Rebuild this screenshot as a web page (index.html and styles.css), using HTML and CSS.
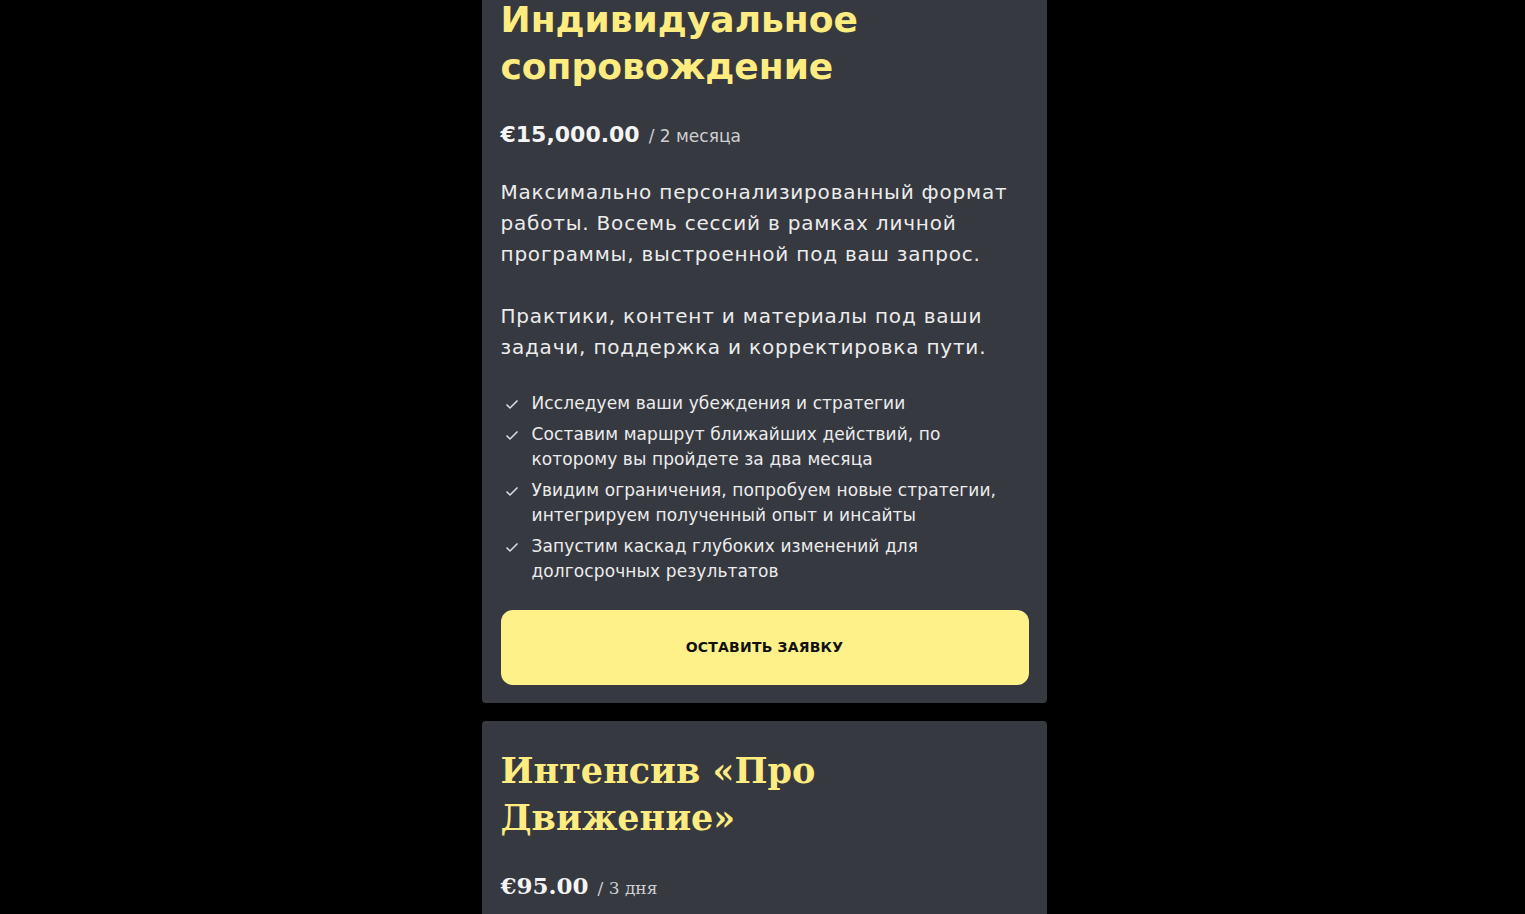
FILE: index.html
```html
<!DOCTYPE html>
<html lang="ru">
<head>
<meta charset="utf-8">
<title>Тарифы</title>
<link rel="stylesheet" href="styles.css">
</head>
<body>
<main class="page">
  <section class="card card-sans">
    <h2 class="title">Индивидуальное сопровождение</h2>
    <div class="price-row">
      <span class="price">€15,000.00</span>
      <span class="period">/ 2 месяца</span>
    </div>
    <div class="desc">
      <p>Максимально персонализированный формат работы. Восемь сессий в рамках личной программы, выстроенной под ваш запрос.</p>
      <p>Практики, контент и материалы под ваши задачи, поддержка и корректировка пути.</p>
    </div>
    <ul class="features">
      <li><svg class="check" viewBox="0 0 16 16"><path d="M2.5 8.5 L6 12 L13.5 4.5"/></svg><span>Исследуем ваши убеждения и стратегии</span></li>
      <li><svg class="check" viewBox="0 0 16 16"><path d="M2.5 8.5 L6 12 L13.5 4.5"/></svg><span>Составим маршрут ближайших действий, по которому вы пройдете за два месяца</span></li>
      <li><svg class="check" viewBox="0 0 16 16"><path d="M2.5 8.5 L6 12 L13.5 4.5"/></svg><span>Увидим ограничения, попробуем новые стратегии, интегрируем полученный опыт и инсайты</span></li>
      <li><svg class="check" viewBox="0 0 16 16"><path d="M2.5 8.5 L6 12 L13.5 4.5"/></svg><span>Запустим каскад глубоких изменений для долгосрочных результатов</span></li>
    </ul>
    <button class="cta">ОСТАВИТЬ ЗАЯВКУ</button>
  </section>
  <section class="card card-serif">
    <h2 class="title">Интенсив «Про Движение»</h2>
    <div class="price-row">
      <span class="price">€95.00</span>
      <span class="period">/ 3 дня</span>
    </div>
  </section>
</main>
</body>
</html>
```
FILE: styles.css
```css
html, body {
  margin: 0;
  padding: 0;
  background: #000;
  height: 100%;
  overflow: hidden;
}

.page {
  width: 565px;
  margin: -30px 0 0 calc(50% - 281px);
  display: flex;
  flex-direction: column;
  gap: 18px;
}

.card {
  background: #363940;
  border-radius: 4px;
  padding: 26px 18px 18px 19px;
  color: #ececec;
}

.card-sans {
  font-family: "DejaVu Sans", "Noto Sans", sans-serif;
}

.card-serif {
  font-family: "DejaVu Serif", "Liberation Serif", serif;
  min-height: 200px;
}

.title {
  margin: 0;
  color: #ffec80;
  font-size: 36px;
  line-height: 47px;
  font-weight: 700;
}

.price-row {
  margin-top: 32px;
  display: flex;
  align-items: baseline;
  gap: 9px;
}

.price {
  font-size: 22px;
  font-weight: 700;
  color: #f4f4f4;
}

.period {
  font-size: 17px;
  color: #cfcfcf;
}

.desc {
  margin-top: 30px;
  font-size: 20px;
  letter-spacing: 0.8px;
  line-height: 31px;
}

.desc p {
  margin: 0 0 31px 0;
}

.desc p:last-child {
  margin-bottom: 0;
}

.features {
  list-style: none;
  margin: 28px 0 0 0;
  padding: 0 20px 0 0;
  display: flex;
  flex-direction: column;
  gap: 6px;
  font-size: 17px;
  letter-spacing: 0.1px;
  line-height: 25px;
}

.features li {
  display: flex;
  align-items: flex-start;
  gap: 12px;
}

.check {
  flex: none;
  width: 16px;
  height: 16px;
  margin: 5px 0 0 3px;
  fill: none;
  stroke: #e0e0e0;
  stroke-width: 1.5;
}

.cta {
  display: block;
  width: 100%;
  height: 75px;
  margin-top: 26px;
  padding: 0 0 2px 0;
  border: none;
  border-radius: 12px;
  background: #fff18a;
  color: #111;
  font-family: inherit;
  font-size: 14px;
  font-weight: 700;
  letter-spacing: 0.2px;
}

.card-serif .title {
  font-size: 35px;
}

.card-serif .price-row {
  margin-top: 31px;
}

.card-serif .price {
  font-size: 23px;
}
```
